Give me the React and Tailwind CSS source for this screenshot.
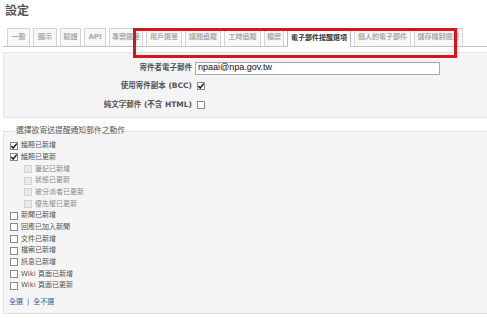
import React from 'react';

const tabs = [
  { label: '一般', w: 'w-[23px]' },
  { label: '顯示', w: 'w-[24px]' },
  { label: '驗證', w: 'w-[21px]' },
  { label: 'API', w: 'w-[22px]' },
  { label: '專案選單', w: 'w-[34px]' },
  { label: '用戶選單', w: 'w-[36px]' },
  { label: '議題追蹤', w: 'w-[36px]' },
  { label: '工時追蹤', w: 'w-[37px]' },
  { label: '檔案', w: 'w-[20px]' },
  { label: '電子郵件提醒選項', w: 'w-[64px]', active: true },
  { label: '個人的電子郵件', w: 'w-[57px]' },
  { label: '儲存機制選單', w: 'w-[49px]' },
];

const events = [
  { label: '議題已新增', checked: true },
  { label: '議題已更新', checked: true },
  { label: '筆記已新增', sub: true },
  { label: '狀態已更新', sub: true },
  { label: '被分派者已更新', sub: true },
  { label: '優先權已更新', sub: true },
  { label: '新聞已新增' },
  { label: '回應已加入新聞' },
  { label: '文件已新增' },
  { label: '檔案已新增' },
  { label: '訊息已新增' },
  { label: 'Wiki 頁面已新增' },
  { label: 'Wiki 頁面已更新' },
];

function Check({ checked, disabled }) {
  const box = disabled
    ? 'bg-[#e8e8e8] border-[#d2d2d2]'
    : 'bg-white border-[#8a8a8a]';
  return (
    <span className={`relative inline-block w-[8px] h-[8px] shrink-0 border ${box}`}>
      {checked && (
        <svg className="absolute -left-px -top-px w-[8px] h-[8px]" viewBox="0 0 8 8" fill="none">
          <path d="M1.4 4.1 3.2 6 6.8 1.6" stroke="#1d1d1d" strokeWidth="1.5" />
        </svg>
      )}
    </span>
  );
}

export default function App() {
  return (
    <div className="relative w-[487px] h-[318px] overflow-hidden bg-white font-['DejaVu_Sans','Noto_Sans_CJK_TC',sans-serif]">
      <h2 className="pl-[5px] pt-[4px] h-[18px] text-[12px] leading-[14px] font-bold text-[#555]">設定</h2>

      <div className="mt-[10px] ml-[3px] pl-[4px] h-[19px] flex gap-[3px] border-b border-[#c4c4c4]">
        {tabs.map((t) => (
          <div
            key={t.label}
            className={`${t.w} flex items-center justify-center border-x border-t text-[7px] font-bold whitespace-nowrap ${
              t.active
                ? 'h-[19px] bg-white border-[#bbb] text-[#333]'
                : 'h-[18px] bg-[#f8f8f8] border-[#d4d4d4] text-[#aaa]'
            }`}
          >
            {t.label}
          </div>
        ))}
      </div>

      <div className="mt-[5px] ml-[3px] w-[490px] h-[66px] pt-[8px] bg-[#f4f4f4] border border-[#e6e6e6]">
        <div className="flex items-center h-[14px]">
          <span className="w-[191px] pr-[3px] text-right text-[7.5px] font-bold text-[#555]">寄件者電子郵件</span>
          <div className="w-[245px] h-[13px] flex items-center pl-[2px] bg-white border border-[#a9a9a9] font-['Liberation_Sans',sans-serif] text-[9px] text-[#111]">
            npaai@npa.gov.tw
          </div>
        </div>
        <div className="flex items-center h-[14px] mt-[4px]">
          <span className="w-[191px] pr-[3px] text-right text-[7.5px] font-bold text-[#555]">使用寄件副本 (BCC)</span>
          <span className="ml-[2px] flex">
            <Check checked />
          </span>
        </div>
        <div className="flex items-center h-[14px] mt-[5px]">
          <span className="w-[191px] pr-[3px] text-right text-[7.5px] font-bold text-[#555]">純文字郵件 (不含 HTML)</span>
          <span className="ml-[2px] flex">
            <Check />
          </span>
        </div>
      </div>

      <fieldset className="mt-[8px] ml-[3px] w-[490px] h-[188px] bg-[#f5f5f5] border border-[#e2e2e2] pl-[6px]">
        <legend className="ml-[5px] px-[1px] text-[7.8px] leading-[10px] text-[#555]">選擇欲寄送提醒通知郵件之動作</legend>
        <div className="pt-[4px] flex flex-col">
          {events.map((e) => (
            <div key={e.label} className={`h-[11.67px] flex items-center gap-[3px] ${e.sub ? 'pl-[14px]' : ''}`}>
              <Check checked={e.checked} disabled={e.sub} />
              <span className={`text-[7px] leading-none whitespace-nowrap ${e.sub ? 'text-[#8a8a8a]' : 'text-[#555]'}`}>
                {e.label}
              </span>
            </div>
          ))}
          <div className="mt-[5px] h-[11.67px] flex items-center gap-[4px] text-[7px] -ml-px">
            <span className="text-[#2a6aa8]">全選</span>
            <span className="text-[#555]">|</span>
            <span className="text-[#2a6aa8]">全不選</span>
          </div>
        </div>
      </fieldset>

      <div className="absolute left-[133px] top-[28px] w-[324px] h-[30px] border-[3px] border-[#d7141c]" />
    </div>
  );
}
